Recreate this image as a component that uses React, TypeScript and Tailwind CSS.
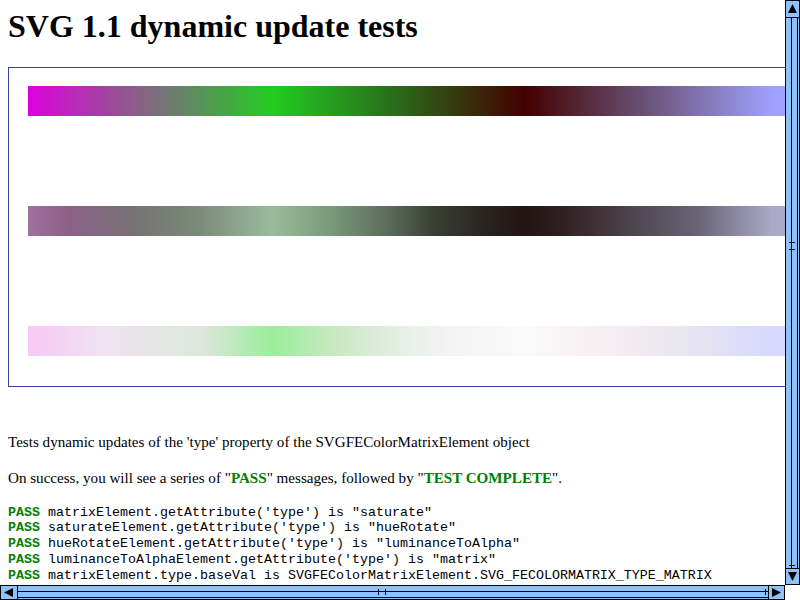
import React from "react";

const BLUE = "#8ec1f7";

function VScroll() {
  return (
    <svg width="15" height="585" className="block">
      <rect width="15" height="585" fill={BLUE} />
      <rect x="0" y="0" width="1" height="585" fill="#000" />
      <rect x="14" y="0" width="1" height="585" fill="#000" />
      <rect x="0" y="0" width="15" height="1" fill="#000" />
      <rect x="0" y="17" width="15" height="1" fill="#000" />
      <polygon points="7.5,4 3,13 12,13" fill="#000" />
      <rect x="6" y="18" width="1" height="550" fill="#000" />
      <rect x="12" y="18" width="1" height="550" fill="#000" />
      <rect x="4" y="242" width="6" height="1" fill="#000" />
      <rect x="4" y="249" width="6" height="1" fill="#000" />
      <rect x="4" y="565" width="6" height="1" fill="#000" />
      <rect x="0" y="568" width="15" height="1" fill="#000" />
      <polygon points="3,572 12,572 7.5,581" fill="#000" />
      <rect x="0" y="584" width="15" height="1" fill="#000" />
    </svg>
  );
}

function HScroll() {
  return (
    <svg width="785" height="15" className="block">
      <rect width="785" height="15" fill={BLUE} />
      <rect x="0" y="0" width="785" height="1" fill="#000" />
      <rect x="0" y="14" width="785" height="1" fill="#000" />
      <rect x="0" y="0" width="1" height="15" fill="#000" />
      <rect x="17" y="0" width="1" height="15" fill="#000" />
      <polygon points="4,7.5 13,3 13,12" fill="#000" />
      <rect x="18" y="6" width="750" height="1" fill="#000" />
      <rect x="18" y="12" width="750" height="1" fill="#000" />
      <rect x="378" y="4" width="1" height="6" fill="#000" />
      <rect x="385" y="4" width="1" height="6" fill="#000" />
      <rect x="765" y="4" width="1" height="6" fill="#000" />
      <rect x="768" y="0" width="1" height="15" fill="#000" />
      <polygon points="772,3 772,12 781,7.5" fill="#000" />
      <rect x="784" y="0" width="1" height="15" fill="#000" />
    </svg>
  );
}

const lines: string[] = [
  "matrixElement.getAttribute('type') is \"saturate\"",
  "saturateElement.getAttribute('type') is \"hueRotate\"",
  "hueRotateElement.getAttribute('type') is \"luminanceToAlpha\"",
  "luminanceToAlphaElement.getAttribute('type') is \"matrix\"",
  "matrixElement.type.baseVal is SVGFEColorMatrixElement.SVG_FECOLORMATRIX_TYPE_MATRIX",
];

export default function App() {
  return (
    <div className="w-[800px] h-[600px] overflow-hidden bg-white flex flex-col text-black [font-family:'Liberation_Serif',serif]">
      <div className="flex h-[585px]">
        <div className="w-[785px] h-[585px] overflow-hidden">
          <div className="w-[830px] pl-2 pt-2">
            <h1 className="text-[32px] font-bold leading-[36px] h-[36px] whitespace-nowrap">
              SVG 1.1 dynamic update tests
            </h1>
            <div className="mt-[23px] h-[320px] w-[812px] border border-[#4040a0] pt-[18px] pl-[19px] flex flex-col gap-[90px]">
              <div className="h-[30px] w-[770px] bg-[linear-gradient(to_right,#dd00dd_0px,#7f6a7f_122px,#22cc22_244px,#2a6a1a_370px,#440000_497px,#6a5478_620px,#a0a0ff_744px)]" />
              <div className="h-[30px] w-[770px] bg-[linear-gradient(to_right,#a070a0_0px,#8c6088_40px,#767474_110px,#7a8a7a_170px,#9bbb9b_244px,#789878_305px,#5a6a5a_362px,#3a4035_405px,#2a2520_455px,#231414_497px,#302022_535px,#4a4048_595px,#6a6678_672px,#aaaac8_744px)]" />
              <div className="h-[30px] w-[770px] bg-[linear-gradient(to_right,#f6c8f6_0px,#efe2ef_75px,#e6e6e6_125px,#dde6dd_175px,#99ee99_244px,#c8e8c0_305px,#e6eee6_372px,#f4f4f4_425px,#fafafa_497px,#f6eef2_575px,#e8e6ee_655px,#d8d8ff_744px)]" />
            </div>
            <p className="mt-[46px] text-[15.1px] leading-[18px] whitespace-nowrap">
              Tests dynamic updates of the 'type' property of the SVGFEColorMatrixElement object
            </p>
            <p className="mt-[18px] text-[15.1px] leading-[18px] whitespace-nowrap">
              On success, you will see a series of "<span className="font-bold text-[#008000]">PASS</span>" messages, followed by "<span className="font-bold text-[#008000]">TEST COMPLETE</span>".
            </p>
            <div className="mt-[17.5px] text-[13.333px] leading-[15.75px] [font-family:'Liberation_Mono',monospace] whitespace-pre">
              {lines.map((t, i) => (
                <div key={i}>
                  <span className="font-bold text-[#008000]">PASS</span> {t}
                </div>
              ))}
            </div>
          </div>
        </div>
        <VScroll />
      </div>
      <div className="flex h-[15px]">
        <HScroll />
        <div className="w-[15px] h-[15px] bg-white" />
      </div>
    </div>
  );
}
